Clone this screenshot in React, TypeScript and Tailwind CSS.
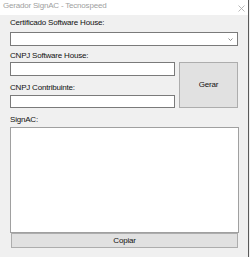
import React from "react";

const font = { fontFamily: '"Liberation Sans", Arial, sans-serif' };

export default function App() {
  return (
    <div
      className="w-[250px] h-[257px] bg-[#f0f0f0] flex flex-col text-[8px] tracking-[-0.2px] text-[#111]"
      style={font}
    >
      <div className="w-[249px] h-[257px] flex flex-col border-r border-[#5a5a5a]">
        {/* Title bar */}
        <div className="h-[15px] bg-white flex items-start justify-between pl-[3px] pr-[3px] pt-[1px]">
          <span className="text-[#a0a0a0] text-[8px] leading-[10px]">
            Gerador SignAC - Tecnospeed
          </span>
          <svg width="7" height="7" viewBox="0 0 7 7" className="mt-[4px]">
            <path d="M0.5 0.5 L6.5 6.5 M6.5 0.5 L0.5 6.5" stroke="#a8a8a8" strokeWidth="0.8" fill="none" />
          </svg>
        </div>

        {/* Body */}
        <div className="flex-1 bg-[#f0f0f0] flex flex-col pl-[10px]">
          <div className="h-[10px] leading-[10px] mt-[3px]">Certificado Software House:</div>
          <div className="mt-[4px] w-[228px] h-[14px] bg-white border border-[#7a7a7a] flex items-center justify-end pr-[4px]">
            <svg width="5" height="3" viewBox="0 0 5 3">
              <path d="M0.5 0.5 L2.5 2.5 L4.5 0.5" stroke="#777" strokeWidth="0.8" fill="none" />
            </svg>
          </div>

          <div className="h-[10px] leading-[10px] mt-[5px]">CNPJ Software House:</div>

          <div className="mt-[1px] flex gap-[4px]">
            <div className="flex flex-col w-[165px]">
              <div className="h-[14px] bg-white border border-[#7a7a7a]" />
              <div className="h-[10px] leading-[10px] mt-[7px]">CNPJ Contribuinte:</div>
              <div className="mt-[2px] h-[13px] bg-white border border-[#7a7a7a]" />
            </div>
            <div className="w-[59px] h-[46px] bg-[#e1e1e1] border border-[#adadad] flex items-center justify-center">
              Gerar
            </div>
          </div>

          <div className="h-[10px] leading-[10px] mt-[7px]">SignAC:</div>
          <div className="mt-[2px] w-[229px] h-[106px] bg-white border border-[#a0a0a0]" />
          <div className="ml-[1px] w-[227px] h-[15px] bg-[#e1e1e1] border border-[#adadad] flex items-center justify-center">
            Copiar
          </div>
        </div>
      </div>
    </div>
  );
}
